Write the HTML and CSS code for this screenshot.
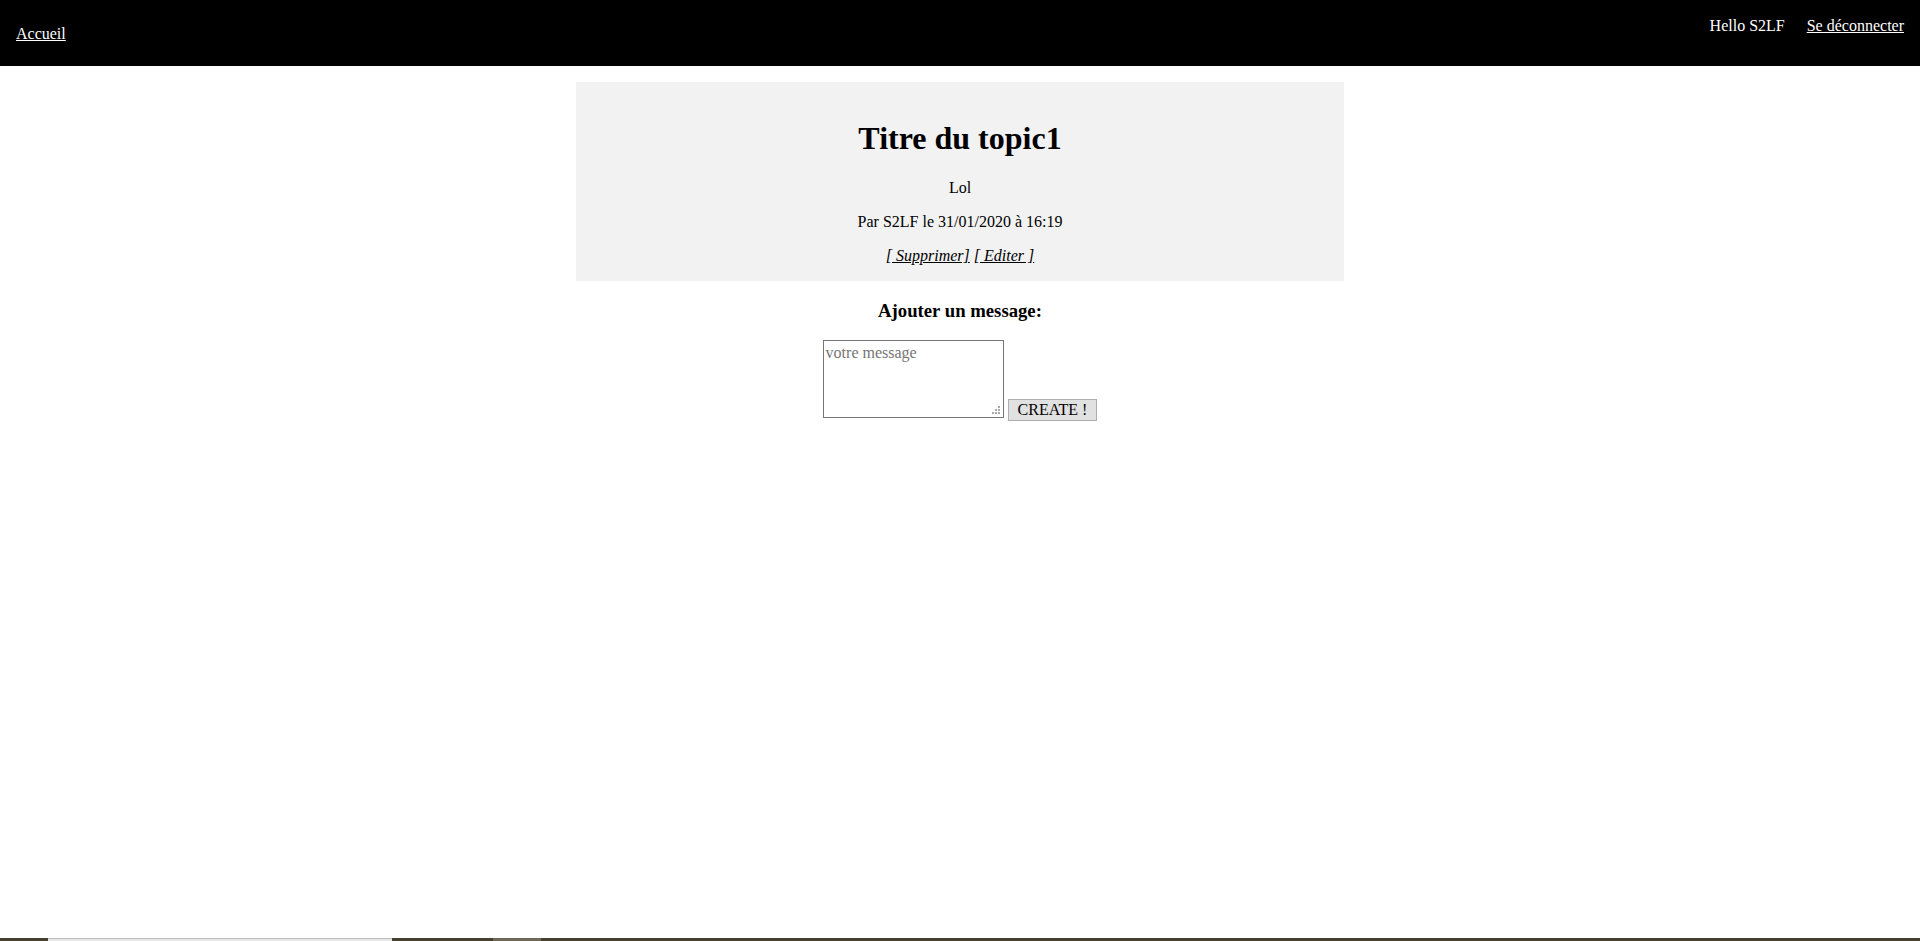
FILE: index.html
```html
<!DOCTYPE html>
<html lang="fr">
<head>
<meta charset="utf-8">
<title>Titre du topic1</title>
<link rel="stylesheet" href="styles.css">
</head>
<body>
<header class="topbar">
  <nav class="nav-left"><a class="nav-link" href="#">Accueil</a></nav>
  <div class="nav-right">
    <span class="hello">Hello S2LF</span>
    <a class="nav-link" href="#">Se déconnecter</a>
  </div>
</header>
<main class="content">
  <section class="topic">
    <h1 class="topic-title">Titre du topic1</h1>
    <p class="topic-body">Lol</p>
    <p class="topic-meta">Par S2LF le 31/01/2020 à 16:19</p>
    <p class="topic-actions"><a class="action" href="#">[ Supprimer]</a> <a class="action" href="#">[ Editer ]</a></p>
  </section>
  <h3 class="add-title">Ajouter un message:</h3>
  <form class="add-form">
    <textarea class="message" placeholder="votre message"></textarea>
    <button class="create" type="button">CREATE !</button>
  </form>
</main>
<div class="taskbar">
  <span class="tb-seg tb-dark1"></span>
  <span class="tb-seg tb-light"></span>
  <span class="tb-seg tb-dark2"></span>
  <span class="tb-seg tb-grey"></span>
  <span class="tb-seg tb-dark3"></span>
</div>
</body>
</html>
```
FILE: styles.css
```css
html, body {
  margin: 0;
  padding: 0;
  background: #ffffff;
  font-family: "Liberation Serif", "Times New Roman", serif;
  font-size: 16px;
  color: #000;
}

.topbar {
  display: flex;
  justify-content: space-between;
  align-items: flex-start;
  height: 66px;
  padding: 0 16px;
  background: #000;
  color: #fff;
}

.nav-left {
  padding-top: 25px;
}

.nav-right {
  display: flex;
  gap: 22px;
  padding-top: 17px;
}

.nav-link {
  color: #fff;
  text-decoration: underline;
}

.content {
  text-align: center;
}

.topic {
  width: 40%;
  margin: 16px auto 0;
  padding: 17px 0 0;
  background: #f2f2f2;
  overflow: hidden;
}

.topic-title {
  font-size: 32px;
  font-weight: bold;
  margin: 21.44px 0;
}

.topic-body,
.topic-meta,
.topic-actions {
  margin: 16px 0;
}

.topic-title + .topic-body {
  margin-top: 0;
}

.action {
  color: #000;
  font-style: italic;
  text-decoration: underline;
}

.add-title {
  font-size: 18.72px;
  font-weight: bold;
  margin: 18.72px 0;
}

.add-form {
  margin: 0;
}

.message {
  box-sizing: border-box;
  width: 181px;
  height: 78px;
  margin: 0;
  padding: 3px 2px;
  border: 1px solid #767676;
  font-family: "Liberation Serif", "Times New Roman", serif;
  font-size: 16px;
  vertical-align: baseline;
  resize: none;
  background: #fff url("data:image/svg+xml,%3Csvg xmlns='http://www.w3.org/2000/svg' width='8' height='8'%3E%3Cg fill='%23a8a8a8'%3E%3Crect x='6' y='0' width='2' height='2'/%3E%3Crect x='3' y='3' width='2' height='2'/%3E%3Crect x='6' y='3' width='2' height='2'/%3E%3Crect x='0' y='6' width='2' height='2'/%3E%3Crect x='3' y='6' width='2' height='2'/%3E%3Crect x='6' y='6' width='2' height='2'/%3E%3C/g%3E%3C/svg%3E") no-repeat right 3px bottom 3px;
}

.message::placeholder {
  color: #757575;
}

.create {
  box-sizing: border-box;
  height: 22px;
  margin: 0;
  padding: 0 9px;
  background: #e1e1e1;
  border: 1px solid #adadad;
  border-radius: 0;
  font-family: "Liberation Serif", "Times New Roman", serif;
  font-size: 16px;
  color: #000;
  vertical-align: 3px;
}

.taskbar {
  position: fixed;
  left: 0;
  right: 0;
  bottom: 0;
  height: 3px;
  display: flex;
}

.tb-seg {
  display: block;
  height: 100%;
}

.tb-dark1 { width: 48px; background: #474030; }
.tb-light { width: 344px; background: #e6e6e6; border-top: 1px solid #bdbdbd; box-sizing: border-box; }
.tb-dark2 { width: 101px; background: #474030; }
.tb-grey { width: 48px; background: #6e6858; }
.tb-dark3 { flex: 1; background: #474030; }
```
